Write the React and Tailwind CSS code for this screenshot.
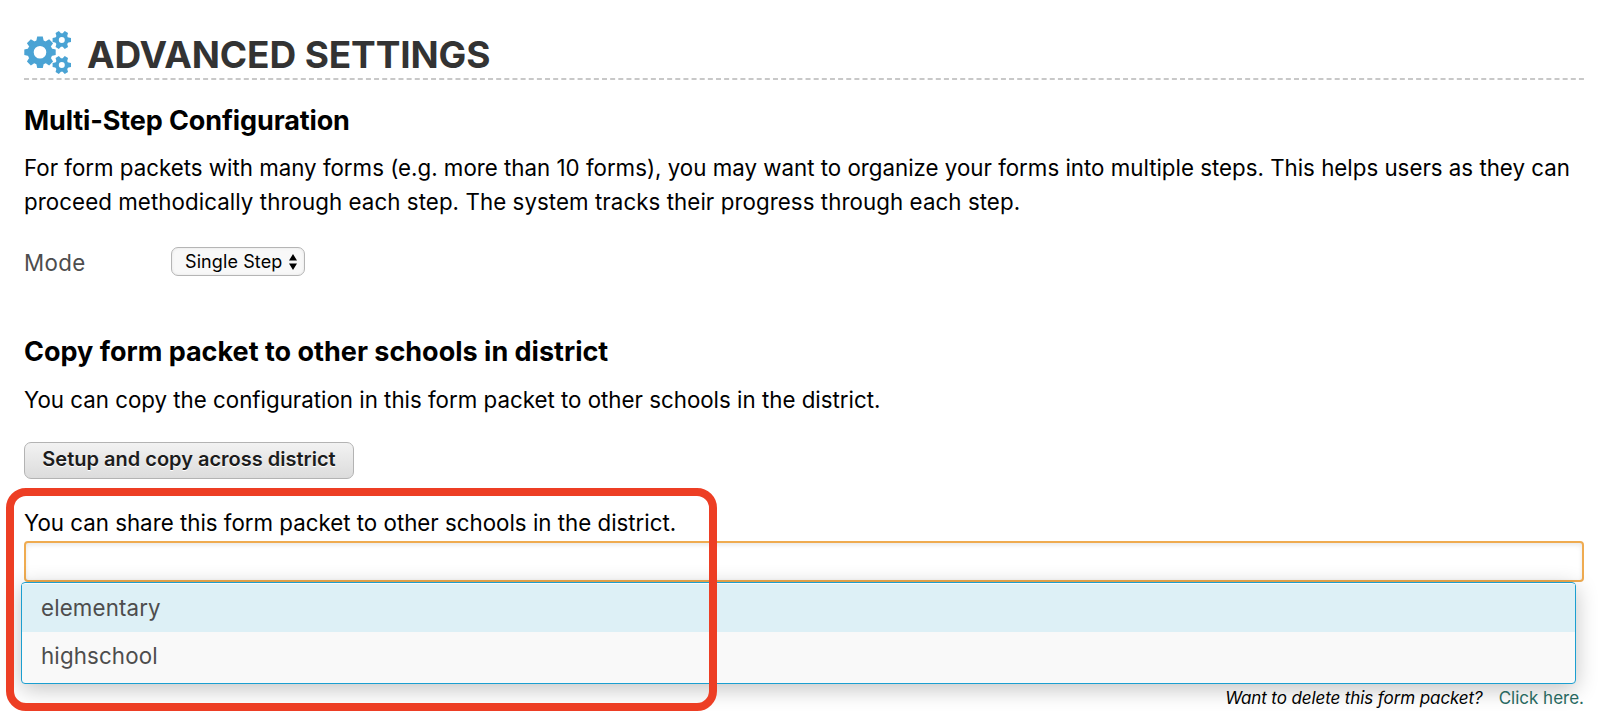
import React, { useState } from 'react';

const schools = ['elementary', 'highschool'];

function Gear({ cx, cy, r, body, hole, teeth, width }) {
    const angles = Array.from({ length: teeth }, (_, i) => (360 / teeth) * i);
    const mid = (body + hole) / 2;

    return (
        <g transform={`translate(${cx} ${cy})`}>
            <circle r={mid} fill="none" stroke="#4aa3d4" strokeWidth={body - hole} />
            {angles.map((angle) => (
                <path
                    key={angle}
                    transform={`rotate(${angle})`}
                    fill="#4aa3d4"
                    d={`M${-width / 2 - 0.9} ${-body + 1} L${-width / 2} ${-r} H${width / 2} L${width / 2 + 0.9} ${-body + 1} Z`}
                />
            ))}
        </g>
    );
}

function GearsIcon() {
    return (
        <svg className="w-12 h-11 shrink-0" viewBox="0 0 48 44">
            <Gear cx={16} cy={22.3} r={15.7} body={12.4} hole={6.3} teeth={8} width={5.6} />
            <g transform="rotate(90 37.8 10)">
                <Gear cx={37.8} cy={10} r={9.2} body={6.7} hole={3} teeth={6} width={3.8} />
            </g>
            <g transform="rotate(90 37.8 35)">
                <Gear cx={37.8} cy={35} r={9.2} body={6.7} hole={3} teeth={6} width={3.8} />
            </g>
        </svg>
    );
}

export default function App() {
    const [active, setActive] = useState(0);

    return (
        <div className="relative h-[728px] overflow-hidden bg-white pl-6 pr-4 pt-[30px] font-[Inter,sans-serif] text-black">
            <header className="flex h-12 items-start">
                <GearsIcon />
                <h1 className="ml-[15px] mt-[5px] text-[37px] leading-10 font-bold tracking-[-0.12px] text-[#333]">ADVANCED SETTINGS</h1>
            </header>
            <svg className="block h-0.5 w-full">
                <line x1="0" y1="1" x2="1560" y2="1" stroke="#c8c8c8" strokeWidth="2" strokeDasharray="5 3.141" />
            </svg>

            <section className="mt-6">
                <h2 className="text-[27px] leading-[34px] font-bold tracking-[-0.12px]">Multi-Step Configuration</h2>
                <p className="mt-[13px] w-[1570px] text-[22.3px] leading-[34px] whitespace-nowrap">
                    For form packets with many forms (e.g. more than 10 forms), you may want to organize your forms into multiple steps. This helps users as they can
                    <br />
                    <span className="tracking-[0.07px]">proceed methodically through each step. The system tracks their progress through each step.</span>
                </p>
                <div className="mt-7 flex h-[29px] items-center">
                    <span className="w-[147px] pt-[3px] text-[22.3px] tracking-[0.4px] text-[#4d4d4d]">Mode</span>
                    <button className="flex h-[29px] w-[134px] items-center rounded-[7px] border border-[#b5b5b5] bg-[#f8f8f8] pl-[13px] text-[18px] tracking-[0.1px] shadow-[inset_0_0_3px_#e4e4e4]">
                        <span>Single Step</span>
                        <svg className="ml-[7px] h-4 w-2 shrink-0" viewBox="0 0 8 16">
                            <path d="M4 0 L8 6.5 H0 Z M4 16 L8 9.5 H0 Z" />
                        </svg>
                    </button>
                </div>
            </section>

            <section className="mt-[59px]">
                <h2 className="text-[27px] leading-[34px] font-bold">Copy form packet to other schools in district</h2>
                <p className="mt-[14px] text-[22.3px] leading-[34px]">You can copy the configuration in this form packet to other schools in the district.</p>
                <button className="mt-[25px] block h-[37px] w-[330px] rounded-[7px] border border-[#b3b3b3] bg-linear-to-b from-[#f2f2f2] to-[#dcdcdc] pb-[3px] text-[20px] font-semibold text-[#1c1c1c] [text-shadow:0_1px_0_#fff]">
                    Setup and copy across district
                </button>
                <p className="mt-[27px] text-[22.3px] leading-[34px]">You can share this form packet to other schools in the district.</p>
                <div className="relative mt-px">
                    <input className="block h-[41px] w-full rounded-[4px] border-2 border-[#efab50] bg-white px-4 text-[22.3px] shadow-[inset_0_2px_5px_#e8e8e8] outline-none" />
                    <ul className="absolute top-[41px] -left-[3px] h-[102px] w-[1555px] rounded-[4px] border border-[#1b9fd0] bg-[#f9f9f9] pt-px text-[22.3px] tracking-[0.15px] text-[#4d4d4d] shadow-[0_5px_22px_rgba(0,0,0,0.24)]">
                        {schools.map((school, i) => (
                            <li
                                key={school}
                                onMouseEnter={() => setActive(i)}
                                className={`flex h-12 items-center px-[19px] ${i === active ? 'bg-[#ddf0f6]' : ''}`}
                            >
                                {school}
                            </li>
                        ))}
                    </ul>
                </div>
            </section>

            <footer className="relative mt-[104px] flex justify-end gap-4 text-[17px] leading-6">
                <em className="tracking-[-0.1px]">Want to delete this form packet?</em>
                <a href="#" className="text-[#28685f]">Click here.</a>
            </footer>

            {/* Highlight around the share field */}
            <div className="pointer-events-none absolute top-[488px] left-[6px] h-[223px] w-[711px] rounded-[20px] border-8 border-[#ed3e24]" />
        </div>
    );
}
